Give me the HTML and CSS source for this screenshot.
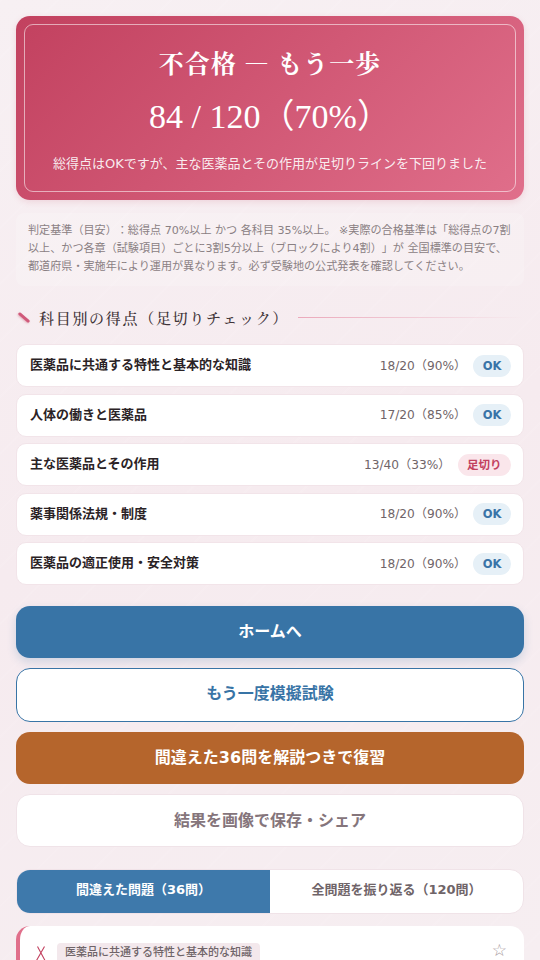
FILE: index.html
```html
<!DOCTYPE html>
<html lang="ja">
<head>
    <meta charset="utf-8">
    <link rel="stylesheet" href="styles.css">
</head>
<body>

<div class="page">

    <div class="hero">
        <div class="hero-title">不合格 — もう一歩</div>
        <div class="hero-score">84 / 120（70%）</div>
        <div class="hero-sub">総得点はOKですが、主な医薬品とその作用が足切りラインを下回りました</div>
    </div>

    <p class="note">判定基準（目安）：総得点 70%以上 かつ 各科目 35%以上。 ※実際の合格基準は「総得点の7割以上、かつ各章（試験項目）ごとに3割5分以上（ブロックにより4割）」が 全国標準の目安で、都道府県・実施年により運用が異なります。必ず受験地の公式発表を確認してください。</p>

    <h3 class="section-head">
        <span class="brush"></span>
        <span>科目別の得点（足切りチェック）</span>
        <span class="head-line"></span>
    </h3>

    <div class="rows">
        <div class="row">
            <b>医薬品に共通する特性と基本的な知識</b>
            <span class="score">18/20（90%）</span>
            <span class="tag ok">OK</span>
        </div>
        <div class="row">
            <b>人体の働きと医薬品</b>
            <span class="score">17/20（85%）</span>
            <span class="tag ok">OK</span>
        </div>
        <div class="row">
            <b>主な医薬品とその作用</b>
            <span class="score">13/40（33%）</span>
            <span class="tag ng">足切り</span>
        </div>
        <div class="row">
            <b>薬事関係法規・制度</b>
            <span class="score">18/20（90%）</span>
            <span class="tag ok">OK</span>
        </div>
        <div class="row">
            <b>医薬品の適正使用・安全対策</b>
            <span class="score">18/20（90%）</span>
            <span class="tag ok">OK</span>
        </div>
    </div>

    <div class="buttons">
        <button class="btn btn-home">ホームへ</button>
        <button class="btn btn-retry">もう一度模擬試験</button>
        <button class="btn btn-review">間違えた36問を解説つきで復習</button>
        <button class="btn btn-share">結果を画像で保存・シェア</button>
    </div>

    <div class="tabs">
        <div class="tab active">間違えた問題（36問）</div>
        <div class="tab">全問題を振り返る（120問）</div>
    </div>

    <div class="card">
        <span class="mark">
            <svg width="10" height="15" viewBox="0 0 10 15"><path d="M1.5 .5 L9 14.5 M8.5 .5 L.5 14.5" fill="none" stroke="#c2415f" stroke-width="1.1"/></svg>
        </span>
        <span class="card-tag">医薬品に共通する特性と基本的な知識</span>
        <span class="star">☆</span>
    </div>

</div>

</body>
</html>
```

FILE: styles.css
```css
html, body{
    margin: 0;
    height: 960px;
    overflow: hidden;
}
body{
    background:
        repeating-linear-gradient(135deg, rgba(255,255,255,0.08) 0 2px, rgba(255,255,255,0) 2px 40px),
        linear-gradient(160deg, #f7f0f3 0%, #f6ebef 50%, #f6eef1 100%);
    font-family: "DejaVu Sans", "Noto Sans CJK JP", sans-serif;
    color: #2b2326;
    text-spacing-trim: space-all;
}
.page{
    padding: 16px;
}
.hero{
    position: relative;
    box-sizing: border-box;
    height: 184px;
    padding-top: 25px;
    border-radius: 14px;
    background: linear-gradient(135deg, #c2415f 0%, #e06f8b 100%);
    box-shadow: 0 2px 6px rgba(194,65,95,0.15);
    color: #fff;
    text-align: center;
}
.hero::after{
    content: "";
    position: absolute;
    top: 8px;
    left: 8px;
    right: 8px;
    bottom: 8px;
    border: 1px solid rgba(255,255,255,0.55);
    border-radius: 9px;
}
.hero-title{
    font-family: "Noto Serif CJK JP", "Liberation Serif", "Noto Sans CJK JP", serif;
    font-size: 25px;
    font-weight: 700;
    line-height: 42px;
    letter-spacing: 1px;
}
.hero-score{
    margin-top: 7px;
    font-family: "Liberation Serif", "Noto Sans CJK JP", serif;
    font-size: 34px;
    line-height: 54px;
}
.hero-sub{
    margin-top: 10px;
    font-size: 13px;
    line-height: 20px;
    color: rgba(255,255,255,0.9);
}
.note{
    box-sizing: border-box;
    height: 73px;
    margin: 13px 0 0;
    padding: 9px 12px 0;
    background: rgba(255,255,255,0.18);
    border-radius: 8px;
    font-size: 11.1px;
    line-height: 18px;
    color: #8a8083;
}
.section-head{
    display: flex;
    align-items: center;
    height: 24px;
    margin: 19px 0 15px;
    font-family: "Noto Serif CJK JP", "Liberation Serif", "Noto Sans CJK JP", serif;
    font-size: 15px;
    font-weight: 500;
    letter-spacing: 1.7px;
    color: #3f3438;
}
.brush{
    width: 14px;
    height: 3px;
    margin: 0 8px 0 1px;
    border-radius: 2px;
    background: #d0597a;
    box-shadow: 0 1px 2px rgba(194,65,95,0.35);
    transform: rotate(40deg);
}
.head-line{
    flex: 1;
    height: 1px;
    margin-left: 9px;
    background: linear-gradient(90deg, #eba9bb, rgba(235,169,187,0));
}
.rows{
    display: flex;
    flex-direction: column;
    gap: 6.5px;
}
.row{
    display: flex;
    align-items: center;
    box-sizing: border-box;
    height: 43px;
    padding: 0 12px 0 13px;
    background: #fff;
    border: 1px solid #f2e4e9;
    border-radius: 10px;
    font-size: 13px;
}
.row b{
    flex: 1;
    margin-bottom: 4px;
    font-weight: 700;
    color: #2b2326;
}
.score{
    margin: 0 7px 2px 0;
    font-size: 12.2px;
    color: #6f6468;
}
.tag{
    padding: 0 9.5px;
    height: 22px;
    line-height: 22px;
    border-radius: 11px;
    font-size: 11.5px;
    font-weight: 700;
}
.ok{
    background: #e6f0f7;
    color: #3a74a8;
}
.ng{
    background: #fae6eb;
    color: #c2415f;
}
.buttons{
    display: flex;
    flex-direction: column;
    gap: 10.2px;
    margin-top: 20.5px;
}
.btn{
    display: block;
    width: 100%;
    height: 52px;
    padding: 0 0 4px;
    border: 0;
    border-radius: 14px;
    font-family: inherit;
    font-size: 16px;
    font-weight: 700;
}
.btn-home{
    background: #3874a6;
    color: #fff;
    box-shadow: 0 4px 10px rgba(56,116,166,0.2);
}
.btn-retry{
    height: 54px;
    padding-bottom: 6px;
    background: #fff;
    border: 1px solid #3874a6;
    color: #3874a6;
}
.btn-review{
    background: #b5652c;
    color: #fff;
}
.btn-share{
    height: 53px;
    background: #fff;
    border: 1px solid #f0e3e8;
    color: #85757b;
}
.tabs{
    display: flex;
    height: 45px;
    margin-top: 21.5px;
    background: #fff;
    border: 1px solid #f0e3e8;
    border-radius: 14px;
    overflow: hidden;
    box-sizing: border-box;
    font-size: 13px;
    font-weight: 700;
}
.tab{
    flex: 1;
    display: flex;
    align-items: center;
    justify-content: center;
    padding-bottom: 6px;
    color: #6f6468;
}
.tab.active{
    background: #3e79ab;
    color: #fff;
}
.card{
    display: flex;
    align-items: flex-start;
    box-sizing: border-box;
    height: 60px;
    margin-top: 12px;
    padding: 17px 17px 0 16px;
    background: #fff;
    border-left: 4px solid #e06f8b;
    border-radius: 14px;
}
.mark{
    display: flex;
    margin: 3px 11px 0 0;
}
.card-tag{
    padding: 0 8px;
    height: 20px;
    line-height: 20px;
    background: #f3e8ec;
    border-radius: 4px;
    font-size: 11px;
    font-weight: 500;
    color: #6f6468;
}
.star{
    margin: -2px 0 0 auto;
    font-size: 17px;
    line-height: 18px;
    color: #a79a9e;
}
```
